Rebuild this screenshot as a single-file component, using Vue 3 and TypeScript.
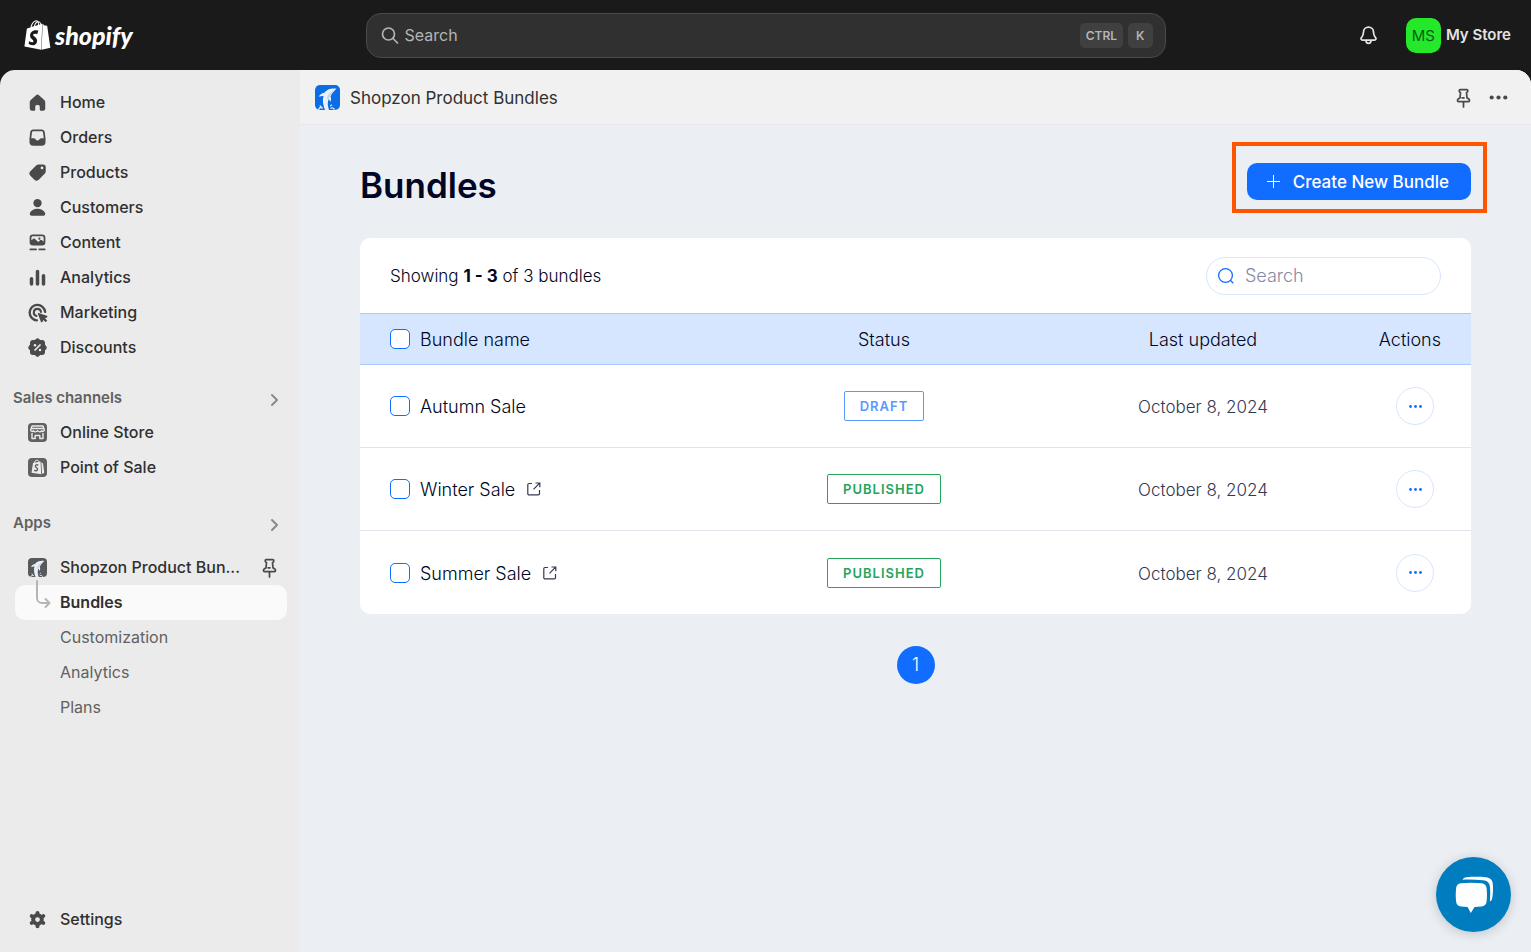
<script setup lang="ts">
import { ref } from 'vue'

interface NavItem {
  label: string
  icon: string
}

interface Bundle {
  id: number
  name: string
  published: boolean
  updated: string
}

const mainNav: NavItem[] = [
  { label: 'Home', icon: 'home' },
  { label: 'Orders', icon: 'orders' },
  { label: 'Products', icon: 'products' },
  { label: 'Customers', icon: 'customers' },
  { label: 'Content', icon: 'content' },
  { label: 'Analytics', icon: 'analytics' },
  { label: 'Marketing', icon: 'marketing' },
  { label: 'Discounts', icon: 'discounts' },
]

const appPages: string[] = ['Bundles', 'Customization', 'Analytics', 'Plans']

const bundles: Bundle[] = [
  { id: 1, name: 'Autumn Sale', published: false, updated: 'October 8, 2024' },
  { id: 2, name: 'Winter Sale', published: true, updated: 'October 8, 2024' },
  { id: 3, name: 'Summer Sale', published: true, updated: 'October 8, 2024' },
]

const selected = ref<number[]>([])

function toggleAll(event: Event): void {
  const checked = (event.target as HTMLInputElement).checked
  selected.value = checked ? bundles.map((b) => b.id) : []
}
</script>

<template>
  <div class="shell">
    <svg class="defs" width="0" height="0" aria-hidden="true">
      <symbol id="pin" viewBox="0 0 20 20">
        <path
          d="M7.300 3.700h5.400c.5 0 .8.400.7.800l-.2 1c-.1.400-.400.600-.8.600l.4 4.300c1.300.4 2 1 2 2 0 .6-.300.900-.8.900H6c-.5 0-.8-.300-.8-.9 0-1 .7-1.600 2-2l.4-4.300c-.4 0-.7-.2-.8-.6l-.2-1c-.1-.4.200-.8.7-.8zM10 13.500v4M8.900 10.200h1.500"
          fill="none" stroke="currentColor" stroke-width="1.400" stroke-linecap="round" stroke-linejoin="round"
        />
      </symbol>
      <symbol id="dolphin" viewBox="0 0 25 25">
        <path d="M21.500 3.800c-4.500-1-9.500.2-12.300 4C6.500 8.400 4.600 9.800 4 11.800c1.800-.7 3.300-.9 4.500-.7C7.300 15.200 7.900 20 10 25h4c-1.500-4.500-1.600-8.200-.4-10.800.8.6 1.500 1.600 1.800 2.800.9-1.900.9-3.900.1-5.500 1-2.600 2.900-4.900 6-7.700z" fill="#e8f1fb" />
        <path d="M19.500 5.200c-3.800 1.300-6.700 3.800-7.700 8.300.500 1 1.400.7 1.800.7.8-3.200 2.700-6.300 5.900-9z" fill="#9fb9d8" opacity=".5" />
        <path d="M3.800 24.300c.6-1.600 2-2.200 3.500-1.200M5.200 21l.8.700M16 23.200c1.300-.8 2.400-.2 3.200 1M15.700 20.800l.8-.7" stroke="#e8f1fb" stroke-width="1.300" fill="none" stroke-linecap="round" />
      </symbol>
    </svg>

    <header class="topbar">
      <a class="logo" href="#">
        <svg width="27" height="30" viewBox="1 0 22 24" fill="#fff" aria-hidden="true">
          <path d="M15.337 23.979l7.216-1.561s-2.604-17.613-2.625-17.730c-.018-.116-.114-.192-.211-.192s-1.929-.136-1.929-.136-1.275-1.274-1.439-1.411c-.045-.037-.075-.057-.121-.074l-.914 21.104h.023zM11.710 11.305s-.81-.424-1.774-.424c-1.447 0-1.504.906-1.504 1.141 0 1.232 3.240 1.715 3.240 4.629 0 2.295-1.440 3.760-3.406 3.760-2.354 0-3.540-1.465-3.540-1.465l.646-2.086s1.245 1.066 2.280 1.066c.675 0 .975-.545.975-.932 0-1.619-2.654-1.694-2.654-4.359-.034-2.237 1.571-4.416 4.827-4.416 1.257 0 1.875.361 1.875.361l-.945 2.715-.02.01zM11.170.83c.136 0 .271.038.405.135-.984.465-2.064 1.639-2.508 3.992-.656.213-1.293.405-1.889.578C7.697 3.750 8.951.84 11.170.84V.83zm1.235 2.949v.135c-.754.232-1.583.484-2.394.736.466-1.777 1.333-2.645 2.085-2.971.193.501.309 1.176.309 2.100zm.539-2.234c.694.074 1.141.867 1.429 1.755-.349.114-.735.231-1.158.366v-.252c0-.752-.096-1.371-.271-1.871v.002zm2.992 1.289c-.02 0-.06.021-.078.021s-.289.075-.714.21c-.423-1.233-1.176-2.370-2.508-2.370h-.115C12.135.209 11.669 0 11.265 0 8.159 0 6.675 3.877 6.210 5.846c-1.194.365-2.063.636-2.160.674-.675.213-.694.232-.772.87-.075.462-1.830 14.063-1.830 14.063L15.009 24l.927-21.166z" />
        </svg>
        <span>shopify</span>
      </a>

      <label class="global-search">
        <svg width="20" height="20" viewBox="0 0 20 20" fill="none" stroke="currentColor" stroke-width="1.700" stroke-linecap="round" aria-hidden="true">
          <circle cx="8.500" cy="9" r="6" />
          <path d="M13 13.500l4.500 4.500" />
        </svg>
        <input type="text" placeholder="Search" aria-label="Search store" />
        <kbd>CTRL</kbd>
        <kbd>K</kbd>
      </label>

      <div class="account">
        <button class="icon-btn" type="button" aria-label="Notifications">
          <svg width="25" height="25" viewBox="0 0 20 20" fill="none" stroke="#e3e3e3" stroke-width="1.400" stroke-linejoin="round" aria-hidden="true">
            <path d="M10 3.300c-2.300 0-4 1.700-4 3.900 0 2.300-.5 3.100-1.500 4.300-.9 1-.5 2.200.8 2.200h9.400c1.300 0 1.700-1.200.8-2.200-1-1.200-1.500-2-1.500-4.300 0-2.200-1.700-3.900-4-3.900z" />
            <path d="M8 14c0 1.300.8 2.200 2 2.200s2-.9 2-2.200" />
          </svg>
        </button>
        <button class="store" type="button">
          <span class="avatar">MS</span>
          <span>My Store</span>
        </button>
      </div>
    </header>

    <div class="frame">
      <aside class="sidebar">
        <nav class="nav">
          <a v-for="item in mainNav" :key="item.label" class="nav-item" href="#">
            <svg class="nav-icon" viewBox="0 0 20 20" fill="currentColor" aria-hidden="true">
              <path v-if="item.icon === 'home'" d="M8.800 4.200a1.800 1.800 0 0 1 2.400 0l4 3.500c.6.6 1 1.300 1 2.200v4.600a2 2 0 0 1-2 2h-1.400a1 1 0 0 1-1-1v-2.300a1.200 1.200 0 0 0-1.200-1.200h-1.200a1.200 1.200 0 0 0-1.200 1.200v2.300a1 1 0 0 1-1 1H5.800a2 2 0 0 1-2-2V9.900c0-.9.4-1.600 1-2.200z" />
              <path v-else-if="item.icon === 'orders'" fill-rule="evenodd" d="M6.600 3.500h6.800c1.300 0 2.200.8 2.400 2l.6 5v3a3 3 0 0 1-3 3H6.600a3 3 0 0 1-3-3v-3l.6-5c.2-1.200 1.100-2 2.400-2zm.2 1.500c-.7 0-1.100.4-1.200 1l-.6 4.500h2c.6 0 1 .2 1.300.7l.2.4c.6 1 2.400 1 3 0l.2-.4c.3-.5.7-.7 1.300-.7h2L14.400 6c-.1-.6-.5-1-1.200-1z" />
              <path v-else-if="item.icon === 'products'" fill-rule="evenodd" d="M11 3.600h3.400a2.200 2.200 0 0 1 2.200 2.200v3.100c0 .8-.3 1.500-.9 2.100l-4.700 4.700a2.500 2.500 0 0 1-3.500 0L4.300 12.500a2.500 2.500 0 0 1 0-3.500l4.600-4.600c.6-.5 1.300-.8 2.100-.8zm2.600 3.800a1.100 1.100 0 1 0 0-2.200 1.100 1.100 0 0 0 0 2.200z" />
              <g v-else-if="item.icon === 'customers'">
                <circle cx="10" cy="6.500" r="3.300" />
                <path d="M10 11c3 0 5.200 1.300 6.100 3.400.4 1-.2 2.100-1.300 2.100H5.200c-1.100 0-1.700-1.100-1.300-2.100C4.800 12.300 7 11 10 11z" />
              </g>
              <g v-else-if="item.icon === 'content'">
                <path fill-rule="evenodd" d="M6.300 3.500h7.400a2.600 2.600 0 0 1 2.600 2.600v3.700a2.600 2.600 0 0 1-2.600 2.600H6.300a2.600 2.600 0 0 1-2.600-2.600V6.100a2.600 2.600 0 0 1 2.600-2.600zM6.300 5c-.7 0-1.200.5-1.200 1.200v2l1.300-1.100c.5-.4 1.100-.4 1.600 0l2.600 2.500 1.500-1.400c.5-.4 1.100-.4 1.600 0l1.200 1.100V6.200c0-.7-.5-1.200-1.200-1.200zm5.200 2.800a.9.900 0 1 0 0-1.800.9.9 0 0 0 0 1.800z" />
                <path d="M4.300 15.500h4.500M11.500 15.500h4.200" stroke="currentColor" stroke-width="1.500" stroke-linecap="round" />
              </g>
              <path v-else-if="item.icon === 'analytics'" d="M5.200 11v4.200M10 5.200v10M14.800 8.500v6.700" stroke="currentColor" stroke-width="2.800" stroke-linecap="round" />
              <g v-else-if="item.icon === 'marketing'">
                <path d="M16.100 9.500A6.200 6.200 0 1 0 9.500 16.300" fill="none" stroke="currentColor" stroke-width="1.900" stroke-linecap="round" />
                <path d="M12.800 9.500A2.900 2.900 0 1 0 9.200 12.800" fill="none" stroke="currentColor" stroke-width="1.700" stroke-linecap="round" />
                <path d="M10.800 10.300l6.700 2.300c.6.200.6.900.1 1.200l-1.500.9 1.700 1.700-1.300 1.300-1.700-1.700-.9 1.500c-.3.500-1 .4-1.200-.1l-2.400-6.500c-.1-.4.200-.7.500-.6z" />
              </g>
              <g v-else>
                <path d="M8.700 3.200a1.800 1.800 0 0 1 2.600 0l.8.800h1.700c1.200 0 2.200 1 2.200 2.200v1.600l.9.900a1.900 1.900 0 0 1 0 2.600l-.9.900v1.600c0 1.200-1 2.200-2.200 2.200h-1.700l-.8.800a1.800 1.800 0 0 1-2.600 0l-.8-.8H6.200A2.200 2.200 0 0 1 4 13.800v-1.600l-.9-.9a1.900 1.900 0 0 1 0-2.600L4 7.800V6.200C4 5 5 4 6.200 4h1.700z" />
                <path d="M8 12l4-4" stroke="#ebebeb" stroke-width="1.400" stroke-linecap="round" />
                <circle cx="8" cy="8.200" r="1" fill="#ebebeb" />
                <circle cx="12" cy="11.900" r="1" fill="#ebebeb" />
              </g>
            </svg>
            <span>{{ item.label }}</span>
          </a>
        </nav>

        <button class="section" type="button">
          <span>Sales channels</span>
          <svg width="10" height="14" viewBox="0 0 10 14" aria-hidden="true"><path d="M2 2l5 5-5 5" /></svg>
        </button>
        <nav class="nav">
          <a class="nav-item" href="#">
            <svg class="nav-icon" viewBox="0 0 25 25" aria-hidden="true">
              <rect x="3" y="3" width="19" height="19" rx="4" fill="#5f6163" />
              <path d="M7 6h11l1.300 4c0 1.500-2 2-2.700.7-.6 1.500-3 1.500-4.100 0-1.100 1.500-3.500 1.500-4.100 0-.7 1.300-2.700.8-2.700-.7zM6.800 8.500h11.400M7 13v5.500h3.200v-3h4.600v3H18V13" fill="none" stroke="#ebebeb" stroke-width="1.400" stroke-linejoin="round" />
            </svg>
            <span>Online Store</span>
          </a>
          <a class="nav-item" href="#">
            <svg class="nav-icon" viewBox="0 0 25 25" aria-hidden="true">
              <rect x="3" y="3" width="19" height="19" rx="4" fill="#5f6163" />
              <path d="M8 8l7.500-1.500.8 12.700L6.500 17.800zM16.300 7.300l1.700 1.200 1.300 9.300-2.200 1.200z" fill="#ebebeb" />
              <path d="M9.500 8.200c0-2 1.200-3 2.500-3s2 1 2 2.500" stroke="#ebebeb" fill="none" />
              <path d="M13.300 10.200c-1.300-.8-3-.4-3 .8 0 1.500 2.500 1.600 2.300 3.400-.2 1.500-2.200 1.700-3.400.7" stroke="#5f6163" stroke-width="1.400" fill="none" />
            </svg>
            <span>Point of Sale</span>
          </a>
        </nav>

        <button class="section apps" type="button">
          <span>Apps</span>
          <svg width="10" height="14" viewBox="0 0 10 14" aria-hidden="true"><path d="M2 2l5 5-5 5" /></svg>
        </button>
        <nav class="nav">
          <div class="nav-item app-row">
            <a class="app-link" href="#">
              <svg class="nav-icon" viewBox="0 0 25 25" aria-hidden="true">
                <rect x="3" y="3" width="19" height="19" rx="4" fill="#58595b" />
                <use href="#dolphin" x="3" y="3" width="19" height="19" />
              </svg>
              <span>Shopzon Product Bun...</span>
            </a>
            <button class="icon-btn" type="button" aria-label="Unpin app">
              <svg width="25" height="25"><use href="#pin" /></svg>
            </button>
          </div>
          <a
            v-for="(page, i) in appPages"
            :key="page"
            class="nav-item sub"
            :class="{ active: i === 0 }"
            href="#"
          >
            <svg v-if="i === 0" class="branch" width="16" height="30" viewBox="0 0 16 30" aria-hidden="true">
              <path d="M2 1v17a5 5 0 0 0 5 5h7M10.500 19l4 4-4 4" />
            </svg>
            <span>{{ page }}</span>
          </a>
        </nav>

        <nav class="nav bottom">
          <a class="nav-item" href="#">
            <svg class="nav-icon" viewBox="0 0 20 20" aria-hidden="true">
              <g fill="currentColor">
                <circle cx="10" cy="10" r="5" />
                <path d="M10 4.700v10.600M5.400 7.300l9.200 5.400M14.600 7.300l-9.200 5.400" stroke="currentColor" stroke-width="3.200" stroke-linecap="round" />
              </g>
              <circle cx="10" cy="10" r="1.900" fill="#ebebeb" />
            </svg>
            <span>Settings</span>
          </a>
        </nav>
      </aside>

      <div class="workspace">
        <div class="app-bar">
          <svg class="app-logo" width="25" height="25" viewBox="0 0 25 25" aria-hidden="true">
            <rect width="25" height="25" rx="5" fill="#0b6ce4" />
            <use href="#dolphin" width="25" height="25" />
          </svg>
          <span class="app-title">Shopzon Product Bundles</span>
          <button class="icon-btn" type="button" aria-label="Pin app">
            <svg width="25" height="25"><use href="#pin" /></svg>
          </button>
          <button class="icon-btn" type="button" aria-label="More actions">
            <svg width="25" height="25" viewBox="0 0 25 25" fill="currentColor" aria-hidden="true">
              <circle cx="5.700" cy="12.500" r="2.100" /><circle cx="12.500" cy="12.500" r="2.100" /><circle cx="19.300" cy="12.500" r="2.100" />
            </svg>
          </button>
        </div>

        <main class="page">
          <div class="page-head">
            <h1>Bundles</h1>
            <div class="highlight">
              <button class="create" type="button">
                <svg width="13" height="13" viewBox="0 0 13 13" stroke="#fff" aria-hidden="true"><path d="M6.500 0v13M0 6.500h13" /></svg>
                <span>Create New Bundle</span>
              </button>
            </div>
          </div>

          <section class="card">
            <div class="card-head">
              <p>Showing <strong>1 - 3</strong> of 3 bundles</p>
              <label class="table-search">
                <svg width="18" height="18" viewBox="0 0 18 18" fill="none" stroke="#116dff" stroke-width="1.300" aria-hidden="true">
                  <circle cx="8.500" cy="8.500" r="6.900" />
                  <path d="M13.300 13.300l3 3" />
                </svg>
                <input type="text" placeholder="Search" aria-label="Search bundles" />
              </label>
            </div>

            <table>
              <thead>
                <tr>
                  <th class="name" scope="col">
                    <label class="pick">
                      <input type="checkbox" :checked="selected.length === bundles.length" @change="toggleAll" />
                      <span>Bundle name</span>
                    </label>
                  </th>
                  <th class="status" scope="col">Status</th>
                  <th class="updated" scope="col">Last updated</th>
                  <th class="actions" scope="col">Actions</th>
                </tr>
              </thead>
              <tbody>
                <tr v-for="bundle in bundles" :key="bundle.id">
                  <td class="name">
                    <div class="name-cell">
                      <label class="pick">
                        <input v-model="selected" type="checkbox" :value="bundle.id" />
                        <span>{{ bundle.name }}</span>
                      </label>
                      <a v-if="bundle.published" class="open" href="#" :aria-label="'Open ' + bundle.name">
                        <svg width="14" height="14" viewBox="0 0 14 14" fill="none" stroke="#333853" stroke-width="1.200" aria-hidden="true">
                          <path d="M5 1.500H2A1.200 1.200 0 0 0 .8 2.700v9A1.200 1.200 0 0 0 2 12.900h9.300a1.200 1.200 0 0 0 1.200-1.200V8M8.500 1h4.300v4.300M12.600 1.200L6.500 7.300" />
                        </svg>
                      </a>
                    </div>
                  </td>
                  <td>
                    <span class="badge" :class="{ live: bundle.published }">{{ bundle.published ? 'PUBLISHED' : 'DRAFT' }}</span>
                  </td>
                  <td class="date">{{ bundle.updated }}</td>
                  <td class="actions">
                    <button class="more" type="button" :aria-label="'Actions for ' + bundle.name">
                      <svg width="13" height="3" viewBox="0 0 13 3" fill="#116dff" aria-hidden="true">
                        <circle cx="1.500" cy="1.500" r="1.400" /><circle cx="6.500" cy="1.500" r="1.400" /><circle cx="11.500" cy="1.500" r="1.400" />
                      </svg>
                    </button>
                  </td>
                </tr>
              </tbody>
            </table>
          </section>

          <nav class="pager" aria-label="Pages">
            <button type="button" aria-current="page">1</button>
          </nav>
        </main>
      </div>
    </div>

    <button class="chat" type="button" aria-label="Open chat">
      <svg width="40" height="38" viewBox="0 0 40 38" fill="#fff" aria-hidden="true">
        <path d="M7 7.200c6-.7 14-.7 20.500 0 3 .3 4.800 2 5.100 5 .5 4.600.5 9 0 13.300-.3 3-2.100 4.700-5.100 5l-7 .4L16.800 37l-3.200-6.100L7 30.500c-3-.3-4.600-2-4.900-5-.5-4.300-.5-8.700 0-13.300.3-3 1.900-4.700 4.900-5z" />
        <path d="M8.500 3.700C9.300 2.100 10.500 1.500 12.500 1.300c6.500-.6 13-.6 19.500 0 4 .4 6.500 2.600 6.800 6.500.4 5 .2 10-.6 14.500-.4 1.900-1.200 2.900-2.400 3.200.5-4.500.6-9.500.2-14.500-.4-4.500-3-6.600-7-6.800-7-.6-14-.7-20.500-.5z" />
      </svg>
    </button>
  </div>
</template>

<style>
body {
  background: #1a1a1a;
}
</style>

<style scoped>
.shell {
  display: flex;
  flex-direction: column;
  min-height: 100vh;
  background: #1a1a1a;
  color: #303030;
  font-family: Inter, "Liberation Sans", sans-serif;
  font-size: 16px;
  line-height: 20px;
}

.shell *,
.shell *::after {
  box-sizing: border-box;
}

.defs {
  position: absolute;
}

a {
  color: inherit;
  text-decoration: none;
}

button,
input {
  margin: 0;
  padding: 0;
  border: 0;
  background: none;
  color: inherit;
  font: inherit;
}

button {
  cursor: pointer;
}

svg {
  display: block;
  flex: none;
}

.icon-btn {
  display: block;
  color: #4a4a4a;
}

.topbar {
  display: grid;
  grid-template-columns: 1fr minmax(300px, 800px) 1fr;
  align-items: center;
  height: 70px;
  padding: 0 20px;
}

.logo {
  display: flex;
  align-items: center;
  gap: 4px;
  margin-left: 4px;
  color: #fff;
  font-family: Lato, sans-serif;
  font-size: 25px;
  font-style: italic;
  font-weight: 900;
}

.global-search {
  display: flex;
  align-items: center;
  gap: 5px;
  height: 45px;
  padding: 0 12px 0 13px;
  border: 1px solid #4a4a4a;
  border-radius: 15px;
  background: #303030;
  color: #b5b5b5;
}

.global-search input {
  flex: 1;
  min-width: 0;
  outline: 0;
  font-size: 16px;
}

.global-search input::placeholder {
  color: #b5b5b5;
  opacity: 1;
}

kbd {
  padding: 0 6px;
  border-radius: 5px;
  background: #404040;
  color: #b5b5b5;
  font-family: inherit;
  font-size: 12px;
  font-weight: 600;
  line-height: 25px;
}

kbd:last-child {
  padding: 0 8px;
}

.account {
  display: flex;
  justify-content: flex-end;
  align-items: center;
  gap: 25px;
}

.store {
  display: flex;
  align-items: center;
  gap: 5px;
  color: #e3e3e3;
  font-size: 15px;
  font-weight: 600;
}

.avatar {
  width: 35px;
  border-radius: 10px;
  background: #25e82b;
  color: #0b5c14;
  font-weight: 400;
  line-height: 35px;
  text-align: center;
}

.frame {
  display: flex;
  flex: 1;
  overflow: hidden;
  border-radius: 15px 15px 0 0;
  background: #ebebeb;
}

.sidebar {
  display: flex;
  flex: none;
  flex-direction: column;
  width: 300px;
  padding: 15px 0;
}

.nav {
  padding: 0 13px 0 15px;
}

.nav-item {
  display: flex;
  align-items: center;
  gap: 10px;
  height: 35px;
  padding-left: 10px;
  border-radius: 10px;
  font-weight: 500;
}

.nav-item span {
  padding-bottom: 2px;
}

.nav-icon {
  width: 25px;
  height: 25px;
  color: #4a4a4a;
}

.section {
  display: flex;
  justify-content: space-between;
  align-items: center;
  height: 30px;
  margin-top: 20px;
  padding: 0 20px 5px 13px;
  color: #616161;
  font-size: 15px;
  font-weight: 600;
}

.section svg {
  margin-top: 5px;
  fill: none;
  stroke: #8a8a8a;
  stroke-width: 2;
  stroke-linecap: round;
  stroke-linejoin: round;
}

.section.apps {
  margin: 25px 0 10px;
}

.app-row {
  gap: 5px;
  padding-right: 5px;
}

.app-link {
  display: flex;
  flex: 1;
  align-items: center;
  gap: 10px;
  white-space: nowrap;
}

.sub {
  position: relative;
  padding-left: 45px;
  color: #616161;
  font-weight: 400;
}

.sub.active {
  background: #fafafa;
  color: #303030;
  font-weight: 600;
}

.branch {
  position: absolute;
  top: -5px;
  left: 20px;
  fill: none;
  stroke: #b5b5b5;
  stroke-width: 2;
  stroke-linecap: round;
  stroke-linejoin: round;
}

.bottom {
  margin-top: auto;
}

.workspace {
  flex: 1;
  min-width: 0;
  background: #ebeff4;
}

.app-bar {
  display: flex;
  align-items: center;
  gap: 10px;
  height: 55px;
  padding: 0 20px 0 15px;
  border-bottom: 1px solid #e5e7ea;
  background: #f1f1f1;
}

.app-title {
  flex: 1;
  padding-top: 2px;
  font-size: 17px;
}

.page {
  padding: 38px 60px;
  color: #000624;
  font-size: 18px;
  line-height: 24px;
  font-weight: 300;
}

.page-head {
  display: flex;
  justify-content: space-between;
  align-items: flex-start;
  margin-bottom: 30px;
}

h1 {
  margin: 0;
  font-size: 35px;
  font-weight: 600;
  line-height: 45px;
}

.highlight {
  position: relative;
}

.highlight::after {
  content: "";
  position: absolute;
  inset: -21px -16px -13px -15px;
  border: 4px solid #ff5500;
  pointer-events: none;
}

.create {
  display: flex;
  align-items: center;
  gap: 13px;
  height: 37px;
  padding: 0 22px 0 20px;
  border-radius: 10px;
  background: #116dff;
  color: #fff;
  font-size: 17px;
  font-weight: 500;
}

.card {
  overflow: hidden;
  border-radius: 10px;
  background: #fff;
}

.card-head {
  display: flex;
  justify-content: space-between;
  align-items: center;
  height: 75px;
  padding: 0 30px;
}

.card-head p {
  margin: 0;
  font-size: 17px;
}

strong {
  font-weight: 700;
}

.table-search {
  display: flex;
  align-items: center;
  gap: 10px;
  width: 235px;
  height: 38px;
  padding: 0 10px;
  border: 1px solid #d6e6fe;
  border-radius: 19px;
}

.table-search input {
  width: 100%;
  min-width: 0;
  outline: 0;
}

.table-search input::placeholder {
  color: #868aa5;
  opacity: 1;
}

table {
  width: 100%;
  border-spacing: 0;
  table-layout: fixed;
}

th,
td {
  padding: 0;
  text-align: center;
  font-weight: 300;
}

th {
  height: 52px;
  padding-top: 2px;
  border: solid #a8caff;
  border-width: 1px 0;
  background: #d6e6fe;
}

td {
  height: 83px;
  border-bottom: 1px solid #dfe5eb;
}

tr:last-child td {
  border-bottom: 0;
}

.name {
  padding-top: 0;
  padding-left: 30px;
}

.status {
  width: 320px;
}

.updated {
  width: 318px;
}

.actions {
  width: 109px;
  padding-right: 37px;
  text-align: right;
}

th.actions {
  padding-right: 30px;
}

.name-cell {
  display: flex;
  align-items: center;
  gap: 12px;
}

.pick {
  display: flex;
  align-items: center;
  gap: 10px;
}

.pick span {
  padding-top: 2px;
}

.pick input {
  flex: none;
  width: 20px;
  height: 20px;
  border: 1px solid #116dff;
  border-radius: 5px;
  background: #fff;
  appearance: none;
}

.pick input:checked {
  background: #116dff;
}

.date {
  padding-top: 2px;
  color: #333853;
  font-size: 17px;
}

.badge {
  display: inline-block;
  padding: 0 15px;
  border: 1px solid #5999ff;
  border-radius: 2px;
  color: #5999ff;
  font-size: 13px;
  font-weight: 600;
  letter-spacing: 1px;
  line-height: 28px;
  vertical-align: middle;
}

.badge.live {
  border-color: #25a55a;
  color: #25a55a;
}

.more {
  display: inline-flex;
  justify-content: center;
  align-items: center;
  width: 38px;
  height: 38px;
  border: 1px solid #d6e6fe;
  border-radius: 50%;
  vertical-align: middle;
}

.pager {
  display: flex;
  justify-content: center;
  padding-top: 32px;
}

.pager button {
  width: 38px;
  height: 38px;
  border-radius: 50%;
  background: #116dff;
  color: #fff;
}

.chat {
  position: fixed;
  right: 20px;
  bottom: 20px;
  display: flex;
  justify-content: center;
  align-items: center;
  width: 75px;
  height: 75px;
  border-radius: 50%;
  background: #007dbf;
  box-shadow: 0 2px 12px rgba(0, 0, 0, 0.18);
}
</style>
